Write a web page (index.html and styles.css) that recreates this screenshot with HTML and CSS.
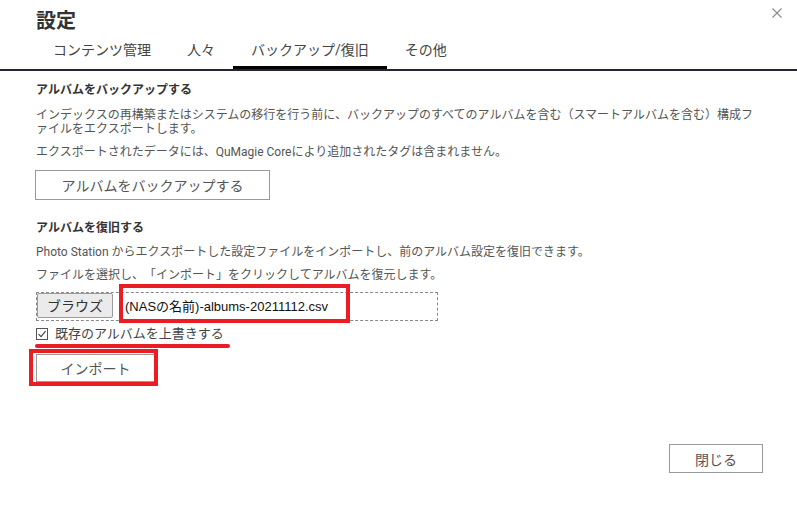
FILE: index.html
```html
<!DOCTYPE html>
<html lang="ja">

<head>
    <meta charset="UTF-8">
    <meta name="viewport" content="width=device-width, initial-scale=1.0">
    <title>設定</title>
    <link rel="stylesheet" href="styles.css">
</head>

<body>

    <div class="dialog">

        <!-- Title and tabs -->
        <div class="dialog-head">
            <div class="head-row">
                <h1>設定</h1>
                <button class="close-x" title="閉じる">
                    <svg width="10" height="10" viewBox="0 0 10 10">
                        <path d="M0.5 0.5 L9.5 9.5 M9.5 0.5 L0.5 9.5" stroke="#8a8a8a" stroke-width="1.1" fill="none" />
                    </svg>
                </button>
            </div>
            <nav class="tabs">
                <span class="tab">コンテンツ管理</span>
                <span class="tab">人々</span>
                <span class="tab active">バックアップ/復旧</span>
                <span class="tab">その他</span>
            </nav>
        </div>

        <div class="dialog-body">

            <!-- Backup -->
            <h2>アルバムをバックアップする</h2>
            <p>インデックスの再構築またはシステムの移行を行う前に、バックアップのすべてのアルバムを含む（スマートアルバムを含む）構成ファイルをエクスポートします。</p>
            <p>エクスポートされたデータには、QuMagie Coreにより追加されたタグは含まれません。</p>
            <button class="btn btn-backup">アルバムをバックアップする</button>

            <!-- Restore -->
            <h2 class="restore-title">アルバムを復旧する</h2>
            <p>Photo Station からエクスポートした設定ファイルをインポートし、前のアルバム設定を復旧できます。</p>
            <p>ファイルを選択し、「インポート」をクリックしてアルバムを復元します。</p>

            <div class="file-box">
                <button class="btn-browse">ブラウズ</button>
                <span class="file-name">(NASの名前)-albums-20211112.csv</span>
            </div>

            <label class="check-row">
                <svg class="check-icon" width="12" height="12" viewBox="0 0 12 12">
                    <rect x="0.5" y="0.5" width="11" height="11" stroke="#555" fill="#fff" />
                    <path d="M2.6 6.2 L5 8.6 L9.6 3.2" stroke="#444" stroke-width="1.2" fill="none" />
                </svg>
                <span>既存のアルバムを上書きする</span>
            </label>

            <div class="import-wrap">
                <button class="btn btn-import">インポート</button>
            </div>
        </div>

        <div class="dialog-foot">
            <button class="btn btn-close">閉じる</button>
        </div>
    </div>

</body>

</html>
```

FILE: styles.css
```css
body {
    margin: 0;
    font-family: Roboto, "Noto Sans CJK JP", sans-serif;
    color: #555;
    background: #fff;
}

.dialog {
    width: 797px;
    height: 505px;
    display: flex;
    flex-direction: column;
    box-sizing: border-box;
}

/* Header */
.head-row {
    display: flex;
    justify-content: space-between;
    align-items: flex-start;
    padding: 9px 15px 0 36px;
}

h1 {
    margin: 0;
    font-size: 20px;
    line-height: 24px;
    font-weight: bold;
    color: #333;
}

.close-x {
    border: none;
    background: none;
    padding: 0;
    margin-top: -1px;
    width: 10px;
    height: 10px;
    line-height: 0;
    cursor: pointer;
}

.tabs {
    display: flex;
    padding-left: 35px;
    border-bottom: 2px solid #22262c;
}

.tab {
    padding: 7px 18px 6px;
    font-size: 14px;
    line-height: 20px;
    color: #444;
    border-bottom: 3px solid transparent;
    white-space: nowrap;
}

.tab.active {
    border-bottom-color: #000;
}

/* Body */
.dialog-body {
    padding: 10px 37px 0 36px;
}

h2 {
    margin: 0 0 9px;
    font-size: 12px;
    line-height: 18px;
    font-weight: bold;
    color: #333;
}

.restore-title {
    margin-top: 19px;
    margin-bottom: 8px;
}

p {
    margin: 0 0 9px;
    font-size: 12px;
    line-height: 14px;
    color: #555;
    line-break: normal;
    text-spacing-trim: space-all;
}

.btn {
    display: block;
    background: #fff;
    border: 1px solid #999;
    color: #555;
    font-family: inherit;
    font-size: 14px;
    padding: 0;
    cursor: pointer;
}

.btn-backup {
    width: 235px;
    height: 30px;
    margin-left: -1px;
    margin-top: 11px;
}

/* File picker */
.file-box {
    position: relative;
    display: flex;
    align-items: flex-start;
    width: 402px;
    height: 29px;
    box-sizing: border-box;
    border: 1px dashed #888;
    margin-top: 10px;
}

/* annotation box over the file name */
.file-box::after {
    content: "";
    position: absolute;
    left: 82px;
    top: -9px;
    width: 231px;
    height: 39px;
    border: 4px solid #ec1c24;
    box-sizing: border-box;
}

.btn-browse {
    width: 76px;
    height: 25px;
    background: #ebebeb;
    border: 1px solid #9a9a9a;
    border-radius: 2px;
    color: #333;
    font-family: inherit;
    font-size: 14px;
    line-height: 20px;
    padding: 0;
}

.file-name {
    margin-left: 12px;
    font-family: "Liberation Sans", "Noto Sans CJK JP", sans-serif;
    font-size: 13px;
    line-height: 27px;
    color: #111;
}

/* Overwrite option */
.check-row {
    position: relative;
    display: flex;
    align-items: center;
    gap: 7px;
    margin-top: 5px;
    font-size: 13px;
    line-height: 16px;
    color: #444;
}

.check-row::after {
    content: "";
    position: absolute;
    left: -1px;
    top: 18px;
    width: 195px;
    height: 4px;
    border-radius: 2px;
    background: #ec1c24;
}

.import-wrap {
    position: relative;
    width: 119px;
    margin-top: 12px;
}

.import-wrap::after {
    content: "";
    position: absolute;
    left: -7px;
    top: -5px;
    width: 129px;
    height: 37px;
    border: 4px solid #ec1c24;
    box-sizing: border-box;
}

.btn-import {
    width: 119px;
    height: 28px;
}

/* Footer */
.dialog-foot {
    margin-top: auto;
    display: flex;
    justify-content: flex-end;
    padding: 0 34px 32px 0;
}

.btn-close {
    width: 94px;
    height: 29px;
}
```
